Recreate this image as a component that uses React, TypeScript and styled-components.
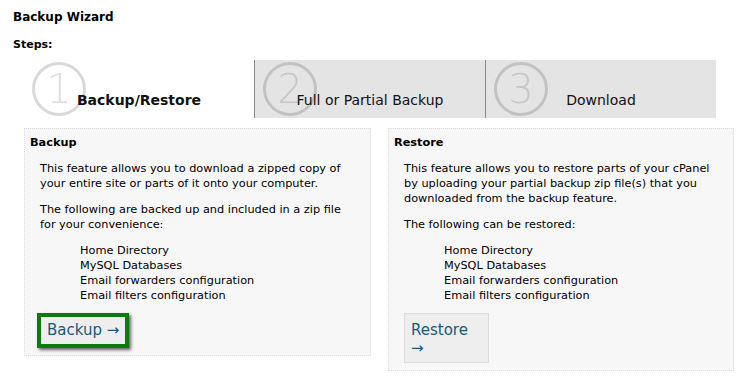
import styled, { createGlobalStyle } from 'styled-components';

const GlobalStyle = createGlobalStyle`
  body {
    margin: 0;
    background: #fff;
    color: #000;
    font-family: "DejaVu Sans", Verdana, sans-serif;
  }
`;

const Page = styled.div`
  padding: 10px 13px;
`;

const Title = styled.h1`
  margin: 0;
  font-size: 12px;
  line-height: 15px;
  font-weight: bold;
`;

const StepsLabel = styled.h2`
  margin: 12px 0 0;
  font-size: 11px;
  line-height: 15px;
  font-weight: bold;
`;

const Wizard = styled.div`
  margin: 8px 0 0 11px;
`;

const TabStrip = styled.div`
  display: flex;
`;

const Tab = styled.div<{ $active?: boolean }>`
  position: relative;
  box-sizing: border-box;
  width: ${(p) => (p.$active ? '230px' : '231px')};
  height: 58px;
  background: ${(p) => (p.$active ? '#fff' : '#e4e4e4')};
  border-left: ${(p) => (p.$active ? 'none' : '1px solid #8a8a8a')};
`;

const StepNumber = styled.span`
  position: absolute;
  left: 8px;
  top: 2px;
  box-sizing: border-box;
  width: 54px;
  height: 54px;
  border: 3px solid rgba(0, 0, 0, 0.15);
  border-radius: 50%;
  display: flex;
  align-items: center;
  justify-content: center;
  font-family: "DejaVu Sans", sans-serif;
  font-weight: 200;
  font-size: 40px;
  line-height: 1;
  color: rgba(0, 0, 0, 0.15);
`;

const TabLabel = styled.div<{ $active?: boolean }>`
  position: relative;
  padding-top: 32px;
  text-align: center;
  font-size: 14px;
  line-height: 17px;
  font-weight: ${(p) => (p.$active ? 'bold' : 'normal')};
  color: #111;
`;

const Panels = styled.div`
  display: grid;
  grid-template-columns: 347px 346px;
  gap: 17px;
  align-items: start;
  margin-top: 10px;
`;

const Panel = styled.section`
  background: #f7f7f7;
  border: 1px dotted #dcdcdc;
  padding: 6px 5px 7px;
`;

const PanelHeading = styled.h3`
  margin: 0;
  font-size: 11.3px;
  line-height: 15px;
  font-weight: bold;
`;

const Text = styled.p`
  margin: 11px 10px 0;
  font-size: 11.3px;
  line-height: 15px;
`;

const ItemList = styled.ul`
  list-style: none;
  margin: 11px 0 0 50px;
  padding: 0;
  font-size: 11.3px;
  line-height: 15px;
`;

const ActionButton = styled.button<{ $highlight?: boolean; $stacked?: boolean }>`
  display: block;
  box-sizing: border-box;
  margin: ${(p) => (p.$highlight ? '10px 0 0 7px' : '10px 0 0 10px')};
  padding: ${(p) => (p.$highlight ? '4px 6px' : '7px 6px 5px')};
  width: ${(p) => (p.$stacked ? '85px' : 'auto')};
  background: #eee;
  border: ${(p) => (p.$highlight ? '4px solid #0b7d0b' : '1px solid #dcdcdc')};
  box-shadow: ${(p) => (p.$highlight ? '2px 2px 3px rgba(0, 0, 0, 0.6)' : 'none')};
  font-family: "DejaVu Sans", Verdana, sans-serif;
  font-size: 15px;
  line-height: ${(p) => (p.$highlight ? '19px' : '18px')};
  color: #165b7a;
  text-align: left;
  cursor: pointer;
`;

const Arrow = styled.span<{ $stacked?: boolean }>`
  display: ${(p) => (p.$stacked ? 'block' : 'inline')};
`;

const steps = [
  { n: '1', label: 'Backup/Restore', active: true },
  { n: '2', label: 'Full or Partial Backup' },
  { n: '3', label: 'Download' },
];

const items = [
  'Home Directory',
  'MySQL Databases',
  'Email forwarders configuration',
  'Email filters configuration',
];

export default function App() {
  return (
    <Page>
      <GlobalStyle />
      <Title>Backup Wizard</Title>
      <StepsLabel>Steps:</StepsLabel>
      <Wizard>
        <TabStrip>
          {steps.map((s) => (
            <Tab key={s.n} $active={s.active}>
              <StepNumber>{s.n}</StepNumber>
              <TabLabel $active={s.active}>{s.label}</TabLabel>
            </Tab>
          ))}
        </TabStrip>
        <Panels>
          <Panel>
            <PanelHeading>Backup</PanelHeading>
            <Text>
              This feature allows you to download a zipped copy of your entire
              site or parts of it onto your computer.
            </Text>
            <Text>
              The following are backed up and included in a zip file for your
              convenience:
            </Text>
            <ItemList>
              {items.map((i) => (
                <li key={i}>{i}</li>
              ))}
            </ItemList>
            <ActionButton $highlight>
              Backup <Arrow>→</Arrow>
            </ActionButton>
          </Panel>
          <Panel>
            <PanelHeading>Restore</PanelHeading>
            <Text>
              This feature allows you to restore parts of your cPanel by
              uploading your partial backup zip file(s) that you downloaded from
              the backup feature.
            </Text>
            <Text>The following can be restored:</Text>
            <ItemList>
              {items.map((i) => (
                <li key={i}>{i}</li>
              ))}
            </ItemList>
            <ActionButton $stacked>
              Restore <Arrow $stacked>→</Arrow>
            </ActionButton>
          </Panel>
        </Panels>
      </Wizard>
    </Page>
  );
}
